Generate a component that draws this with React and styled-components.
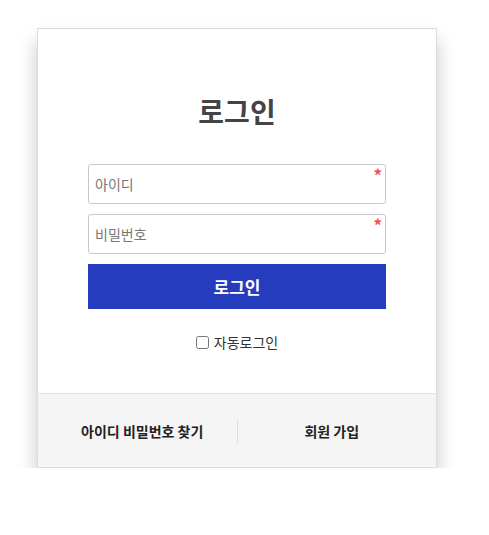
import React from 'react';
import styled, { createGlobalStyle } from 'styled-components';

const Global = createGlobalStyle`
  html, body {
    margin: 0;
    background: #fff;
    font-family: "Noto Sans CJK KR", "Noto Sans", sans-serif;
  }
`;

const Page = styled.div`
  padding: 28px 0 0 37px;
`;

const Card = styled.div`
  width: 398px;
  border: 1px solid #dcdcdc;
  background: #fff;
  box-shadow: 0 12px 18px rgba(0, 0, 0, 0.22);
`;

const Body = styled.div`
  padding: 62px 50px 41px;
  display: flex;
  flex-direction: column;
  align-items: stretch;
`;

const Title = styled.h1`
  margin: 0 0 33px;
  text-align: center;
  font-size: 28px;
  line-height: 40px;
  font-weight: 700;
  color: #444;
`;

const Field = styled.div`
  position: relative;
  margin-bottom: 10px;
`;

const Input = styled.input`
  box-sizing: border-box;
  width: 100%;
  height: 40px;
  border: 1px solid #c8c8c8;
  border-radius: 3px;
  padding: 0 6px;
  font-family: inherit;
  font-size: 14px;
  color: #333;
  &::placeholder {
    color: #777;
  }
`;

const Required = styled.span`
  position: absolute;
  top: 3px;
  right: 4px;
  color: #ff4a4a;
  font-size: 17px;
  font-weight: 700;
  line-height: 16px;
`;

const Submit = styled.button`
  height: 45px;
  border: none;
  background: #253cbf;
  color: #fff;
  font-family: inherit;
  font-size: 17px;
  font-weight: 700;
  cursor: pointer;
`;

const Auto = styled.label`
  margin-top: 23px;
  display: flex;
  justify-content: center;
  align-items: center;
  gap: 5px;
  font-size: 14px;
  color: #333;
  input {
    margin: 0;
    width: 13px;
    height: 13px;
  }
`;

const Footer = styled.div`
  display: flex;
  align-items: center;
  height: 73px;
  border-top: 1px solid #e4e4e4;
  background: #f5f5f5;
`;

const FooterLink = styled.a`
  flex: 1;
  text-align: center;
  font-size: 14px;
  font-weight: 700;
  color: #222;
  text-decoration: none;
  cursor: pointer;
  padding: ${(p) => (p.$side === 'left' ? '0 0 0 10px' : '0 10px 0 0')};
`;

const Divider = styled.span`
  width: 1px;
  height: 24px;
  background: #ddd;
`;

export default function App() {
  return (
    <Page>
      <Global />
      <Card>
        <Body>
          <Title>로그인</Title>
          <Field>
            <Input placeholder="아이디" />
            <Required>*</Required>
          </Field>
          <Field>
            <Input type="password" placeholder="비밀번호" />
            <Required>*</Required>
          </Field>
          <Submit>로그인</Submit>
          <Auto>
            <input type="checkbox" />
            자동로그인
          </Auto>
        </Body>
        <Footer>
          <FooterLink $side="left">아이디 비밀번호 찾기</FooterLink>
          <Divider />
          <FooterLink $side="right">회원 가입</FooterLink>
        </Footer>
      </Card>
    </Page>
  );
}
